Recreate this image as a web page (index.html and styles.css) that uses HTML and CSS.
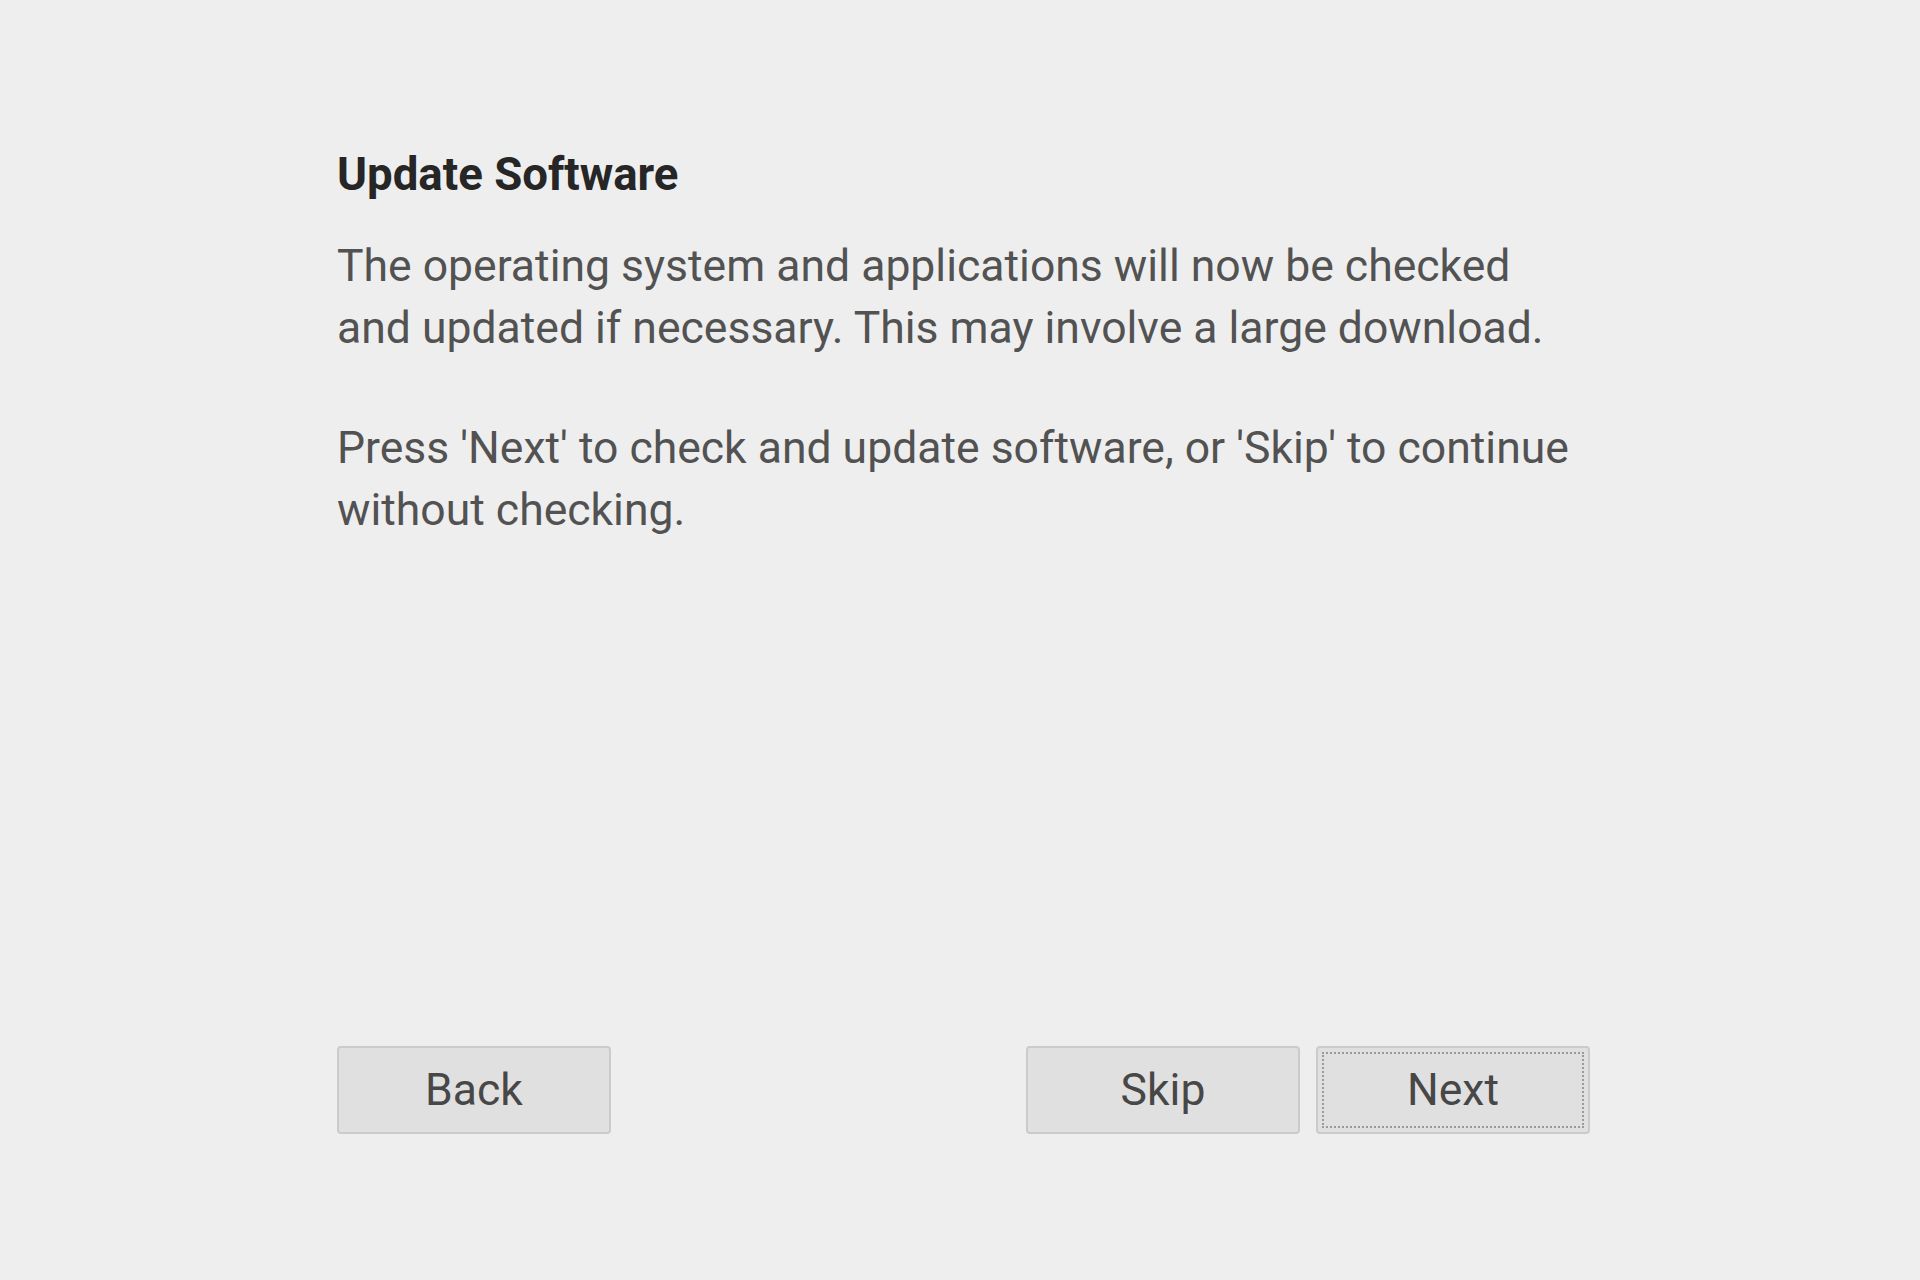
FILE: index.html
```html
<!DOCTYPE html>
<html>
<head>
<meta charset="utf-8">
<link rel="stylesheet" href="styles.css">
</head>
<body>
<div class="page">
  <h1 class="title">Update Software</h1>
  <p class="text">The operating system and applications will now be checked<br>and updated if necessary. This may involve a large download.</p>
  <p class="text second">Press 'Next' to check and update software, or 'Skip' to continue<br>without checking.</p>
  <div class="buttons">
    <button class="btn">Back</button>
    <div class="right">
      <button class="btn">Skip</button>
      <button class="btn focus">Next</button>
    </div>
  </div>
</div>
</body>
</html>
```
FILE: styles.css
```css
html, body {
  margin: 0;
  padding: 0;
  background: #eeeeee;
}
body {
  font-family: Roboto, "Liberation Sans", sans-serif;
}
.page {
  width: 1253px;
  height: 1280px;
  margin: 0 0 0 337px;
  padding: 144px 0 146px 0;
  box-sizing: border-box;
  display: flex;
  flex-direction: column;
}
.title {
  margin: 0;
  font-size: 45.6px;
  line-height: 62px;
  font-weight: 700;
  color: #262626;
}
.text {
  margin: 29px 0 0 0;
  font-size: 44.5px;
  line-height: 62px;
  font-weight: 400;
  color: #525252;
}
.text.second {
  margin-top: 58px;
}
.buttons {
  margin-top: auto;
  display: flex;
  justify-content: space-between;
}
.right {
  display: flex;
  gap: 16px;
}
.btn {
  width: 274px;
  height: 88px;
  box-sizing: border-box;
  background: #e0e0e0;
  border: 2px solid #cbcbcb;
  border-radius: 4px;
  font-family: Roboto, "Liberation Sans", sans-serif;
  font-size: 44.5px;
  color: #474747;
  padding: 0;
  position: relative;
}
.btn.focus::after {
  content: "";
  position: absolute;
  inset: 4px;
  border: 2px dotted #9a9a9a;
}
```
